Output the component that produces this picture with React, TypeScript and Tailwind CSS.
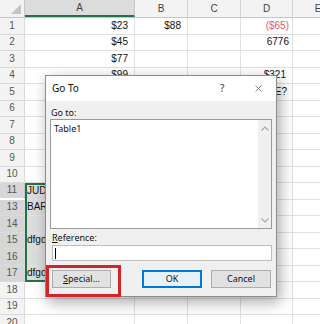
import { X } from 'lucide-react'

type Row = {
  n: number
  a?: string
  b?: string
  d?: string
  aLeft?: boolean
  dRed?: boolean
  dPad?: string
  sel?: boolean
  hiddenAfter?: boolean
}

const rows: Row[] = [
  { n: 1, a: '$23', b: '$88', d: '($65)', dRed: true, dPad: 'pr-[3px]' },
  { n: 2, a: '$45', d: '6776', dPad: 'pr-[3px]' },
  { n: 3, a: '$77' },
  { n: 4, a: '$99', d: '$321', dPad: 'pr-[6px]' },
  { n: 5, d: 'TRUE?', dPad: 'pr-[5px]' },
  { n: 6 },
  { n: 7 },
  { n: 8 },
  { n: 9 },
  { n: 10 },
  { n: 11, a: 'JUDY', aLeft: true, sel: true, hiddenAfter: true },
  { n: 13, a: 'BARRY', aLeft: true, sel: true },
  { n: 14, sel: true },
  { n: 15, a: 'dfgdfg', aLeft: true, sel: true },
  { n: 16, sel: true },
  { n: 17, a: 'dfgdfg', aLeft: true, sel: true },
  { n: 18 },
  { n: 19 },
  { n: 20 },
]

function Sheet() {
  return (
    <div className="relative">
      {/* column headers */}
      <div className="flex h-[18px] border-b border-[#c6c6c6] bg-[#f3f3f3] text-[10px] text-[#444]">
        <div className="relative w-[25px] shrink-0 border-r border-[#c6c6c6]">
          <svg className="absolute bottom-[3px] right-[3px]" width="10" height="10" viewBox="0 0 10 10">
            <path d="M10 0 L10 10 L0 10 Z" fill="#c4c4c4" />
          </svg>
        </div>
        <div className="flex w-[110px] shrink-0 items-center justify-center border-r border-[#c6c6c6] border-b-2 border-b-[#217346] bg-[#dcdcdc]">A</div>
        <div className="flex w-[53px] shrink-0 items-center justify-center border-r border-[#d4d4d4]">B</div>
        <div className="flex w-[53px] shrink-0 items-center justify-center border-r border-[#d4d4d4]">C</div>
        <div className="flex w-[52px] shrink-0 items-center justify-center border-r border-[#d4d4d4]">D</div>
        <div className="flex w-[50px] shrink-0 items-center justify-center">E</div>
      </div>

      {rows.map((r) => (
        <div key={r.n} className="flex h-[16.5px] text-[10px] leading-none text-[#111]">
          <div
            className={`flex w-[25px] shrink-0 items-center justify-center border-r border-[#c6c6c6] text-[#555] ${
              r.sel ? 'bg-[#d6d6d6]' : 'bg-[#f3f3f3]'
            } ${r.hiddenAfter ? 'border-b-2 border-b-white' : 'border-b border-[#dadada]'}`}
          >
            {r.n}
          </div>
          <div
            className={`flex w-[110px] shrink-0 items-center overflow-hidden whitespace-nowrap border-r border-b border-[#e0e0e0] ${
              r.aLeft ? 'justify-start pl-[2px]' : 'justify-end pr-[6px]'
            } ${r.sel ? 'bg-[#dcdcdc] border-[#cfcfcf]' : ''}`}
          >
            {r.a}
          </div>
          <div className="flex w-[53px] shrink-0 items-center justify-end border-r border-b border-[#e0e0e0] pr-[6px]">{r.b}</div>
          <div className="w-[53px] shrink-0 border-r border-b border-[#e0e0e0]" />
          <div
            className={`flex w-[52px] shrink-0 items-center justify-end border-r border-b border-[#e0e0e0] ${r.dPad ?? ''} ${
              r.dRed ? 'text-[#de5b5e]' : ''
            }`}
          >
            {r.d}
          </div>
          <div className="w-[50px] shrink-0 border-b border-[#e0e0e0]" />
        </div>
      ))}

      {/* selection outline A11:A17 */}
      <div className="pointer-events-none absolute left-[25px] top-[183px] h-[99px] w-[110px] border-2 border-[#217346]" />
    </div>
  )
}

function Chevron({ up }: { up?: boolean }) {
  return (
    <svg width="8" height="5" viewBox="0 0 8 5">
      <path d={up ? 'M0.5 4.5 L4 1 L7.5 4.5' : 'M0.5 0.5 L4 4 L7.5 0.5'} fill="none" stroke="#a8a8a8" strokeWidth="1.2" />
    </svg>
  )
}

function GoToDialog() {
  return (
    <div className="absolute left-[45px] top-[75px] h-[222px] w-[232px] border border-[#8c8c8c] bg-[#f0f0f0] font-['Noto_Sans',sans-serif] text-[9px] text-[#111] shadow-[3px_5px_14px_rgba(0,0,0,0.35)]">
      <div className="relative flex h-[25px] items-center bg-white pl-[6px] text-[10px]">
        <span>Go To</span>
        <span className="absolute left-[174px] top-[5px] text-[10px] text-[#333]">?</span>
        <X className="absolute left-[207px] top-[7px] h-[11px] w-[11px] text-[#333]" strokeWidth={1.3} />
      </div>

      <div className="flex flex-col px-[4px] pt-[6px]">
        <div className="flex h-[12px] items-center pl-[1px]">Go to:</div>
        <div className="flex h-[110px] border border-[#9a9a9a] bg-white">
          <div className="flex-1 pl-[3px] pt-[2px]">Table1</div>
          <div className="flex w-[13px] flex-col items-center justify-between bg-[#f0f0f0] pt-[6px] pb-[5px]">
            <Chevron up />
            <Chevron />
          </div>
        </div>

        <div className="mt-[3px] h-[12px] pl-[2px] leading-[12px] first-letter:underline">Reference:</div>
        <div className="ml-[2px] mt-[1px] flex h-[16px] items-center border border-[#bdbdbd] bg-white pl-[2px]">
          <span className="h-[11px] w-px bg-black" />
        </div>

        <div className="mt-[9px] flex h-[18px] pl-[2px]">
          <button className="w-[59px] border border-[#adadad] bg-[#e1e1e1] text-center leading-[16px] first-letter:underline" type="button">
            Special...
          </button>
          <button className="ml-[31px] flex w-[60px] items-center justify-center border-2 border-[#0078d7] bg-[#e5f1fb]" type="button">
            OK
          </button>
          <button className="ml-[9px] flex w-[60px] items-center justify-center border border-[#adadad] bg-[#e1e1e1]" type="button">
            Cancel
          </button>
        </div>
      </div>

      {/* red highlight around Special... */}
      <div className="pointer-events-none absolute left-0 top-[189px] h-[32px] w-[75px] border-[3px] border-[#d3242c]" />
    </div>
  )
}

export default function App() {
  return (
    <div className="relative h-[324px] w-[320px] overflow-hidden bg-white font-['Liberation_Sans',Arial,sans-serif]">
      <Sheet />
      <GoToDialog />
    </div>
  )
}
